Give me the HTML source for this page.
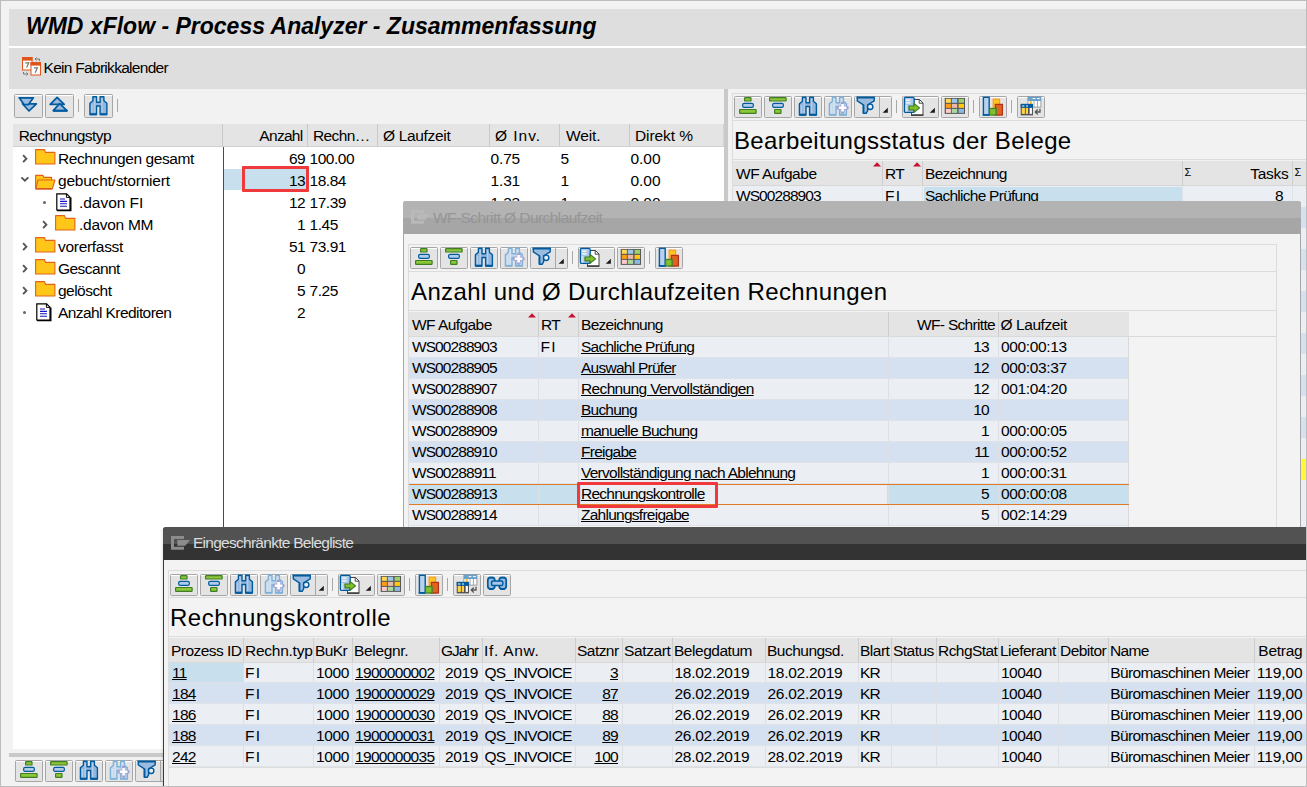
<!DOCTYPE html><html><head><meta charset="utf-8"><title>WMD xFlow - Process Analyzer</title><style>
*{box-sizing:border-box;margin:0;padding:0}
html,body{width:1307px;height:787px;overflow:hidden;background:#f2f2f2}
body{position:relative;font-family:"Liberation Sans",sans-serif;font-size:15.5px;letter-spacing:-0.72px;color:#000;white-space:nowrap}
.a{position:absolute}
.t{position:absolute;white-space:pre;line-height:21px;height:21px}
.r{text-align:right}
.u{text-decoration:underline;text-underline-offset:1px;text-decoration-thickness:1px}
.btn{position:absolute;height:22px;background:#e4e4e4;border:1px solid #a6a6a6;border-radius:1.5px;box-shadow:inset 0 1px 0 #ffffff}
.btn svg{position:absolute;left:-1px;top:-1px}
.sep{position:absolute;width:1px;height:13px;background:#a8a8a8}
.hl{position:absolute;height:1px;background:#dcdcdc}
.vl{position:absolute;width:1px;background:#dcdcdc}
.hd{position:absolute;background:#e4e4e4}
.h1{position:absolute;font-size:24px;letter-spacing:0.3px;line-height:30px;height:30px;white-space:pre}
</style></head><body>
<div class="a" style="left:9px;top:9px;width:1297px;height:37px;background:#dedede;"></div>
<div class="a" style="left:26px;top:9px;height:37px;line-height:35px;font-size:23px;font-weight:bold;font-style:italic;letter-spacing:0px;white-space:pre">WMD xFlow - Process Analyzer - Zusammenfassung</div>
<div class="a" style="left:9px;top:46px;width:1297px;height:2px;background:#ffffff;"></div>
<div class="a" style="left:9px;top:48px;width:1297px;height:41px;background:#dedede;"></div>
<svg class="a" style="left:21px;top:56px" width="22" height="22" viewBox="0 0 22 22"><rect x="1.5" y="1.5" width="9.5" height="12.5" fill="#fff" stroke="#e0541c" stroke-width="1"/><rect x="1" y="1" width="10.5" height="3.6" fill="#e0541c"/><path d="M4.2 6.8 H7.8 L5.6 11.6" fill="none" stroke="#777" stroke-width="1.2"/><rect x="10" y="6.5" width="9.5" height="12.5" fill="#fff" stroke="#e0541c" stroke-width="1"/><rect x="9.5" y="6" width="10.5" height="3.6" fill="#e0541c"/><path d="M12.8 11.8 H16.4 L14.2 16.8" fill="none" stroke="#777" stroke-width="1.2"/><path d="M14 3 H18.5 V5 M15.5 1.5 L14 3 L15.5 4.5" fill="none" stroke="#777" stroke-width="1"/><path d="M2.5 16 V18 H7 M5.5 16.5 L7 18 L5.5 19.5" fill="none" stroke="#777" stroke-width="1"/></svg>
<div class="t " style="left:43.5px;top:57px;line-height:21px;height:21px;;letter-spacing:-0.704px">Kein Fabrikkalender</div>
<div class="btn" style="left:14px;top:94px;width:29px;height:24px"><svg width="29" height="24" viewBox="0 0 29 24"><path d="M8.4 9.8 H22.4 L15 17 Z" fill="#9bbbdf" stroke="#005b9e" stroke-width="1.7" stroke-linejoin="round"/><path d="M5.2 3.8 H19.4 L14.4 10.6 H10 Z" fill="#9bbbdf" stroke="#005b9e" stroke-width="1.7" stroke-linejoin="round"/><path d="M5 3.7 H19.6" stroke="#005b9e" stroke-width="1.2"/></svg></div>
<div class="btn" style="left:45px;top:94px;width:29px;height:24px"><svg width="29" height="24" viewBox="0 0 29 24"><path d="M12.1 3.4 L19.2 10.4 H5.2 Z" fill="#9bbbdf" stroke="#005b9e" stroke-width="1.7" stroke-linejoin="round"/><path d="M14.6 9.6 L22 16.6 H8.2 Z" fill="#9bbbdf" stroke="#005b9e" stroke-width="1.7" stroke-linejoin="round"/><path d="M8 16.8 H22.4" stroke="#005b9e" stroke-width="2"/></svg></div>
<div class="sep" style="left:78px;top:99px"></div>
<div class="btn" style="left:84px;top:94px;width:29px;height:24px"><svg width="29" height="24" viewBox="-0.5 -1.5 29 24"><path d="M8.4 1.3 H12 V6.7 H15.6 V1.3 H19.4 V5.2 L22.4 7.8 V19 H15.6 V10.5 H12 V19 H5.4 V7.8 L8.4 5.2 Z" fill="#92b5dc" stroke="#005b9e" stroke-width="1.4" stroke-linejoin="round"/><path d="M5.4 18.7 H12 M15.6 18.7 H22.4" stroke="#005b9e" stroke-width="2"/><path d="M7.4 9 V17 M10.2 3 V17 M17.6 3 V17" stroke="#b4cde9" stroke-width="1.4"/></svg></div>
<div class="sep" style="left:117px;top:99px"></div>
<div class="a" style="left:13px;top:124px;width:711px;height:23px;background:#e4e4e4;"></div>
<div class="a" style="left:13px;top:146px;width:711px;height:1px;background:#d0d0d0;"></div>
<div class="a" style="left:13px;top:147px;width:711px;height:602px;background:#ffffff;"></div>
<div class="a" style="left:222px;top:124px;width:1px;height:22px;background:#c9c9c9;"></div>
<div class="a" style="left:307px;top:124px;width:1px;height:22px;background:#c9c9c9;"></div>
<div class="a" style="left:377px;top:124px;width:1px;height:22px;background:#c9c9c9;"></div>
<div class="a" style="left:489px;top:124px;width:1px;height:22px;background:#c9c9c9;"></div>
<div class="a" style="left:559px;top:124px;width:1px;height:22px;background:#c9c9c9;"></div>
<div class="a" style="left:629px;top:124px;width:1px;height:22px;background:#c9c9c9;"></div>
<div class="a" style="left:723px;top:124px;width:1px;height:23px;background:#d4d4d4;"></div>
<div class="a" style="left:223px;top:147px;width:1px;height:380px;background:#4a4a4a;"></div>
<div class="t " style="left:18.7px;top:125px;line-height:22px;height:22px;;letter-spacing:-0.566px">Rechnungstyp</div>
<div class="t " style="left:313px;top:125px;line-height:22px;height:22px;;letter-spacing:-0.624px">Rechn…</div>
<div class="t " style="left:383px;top:125px;line-height:22px;height:22px;;letter-spacing:-0.328px">Ø Laufzeit</div>
<div class="t " style="left:495px;top:125px;line-height:22px;height:22px;;letter-spacing:0.984px">Ø Inv.</div>
<div class="t " style="left:566px;top:125px;line-height:22px;height:22px;;letter-spacing:-0.126px">Weit.</div>
<div class="t " style="left:635px;top:125px;line-height:22px;height:22px;;letter-spacing:-0.086px">Direkt %</div>
<div class="t r" style="left:230px;top:125px;line-height:22px;height:22px;width:72.5px;;letter-spacing:-0.705px">Anzahl</div>
<div class="a" style="left:224px;top:169px;width:84px;height:21px;background:#c8e0ee;"></div>
<svg class="a" style="left:21.5px;top:153.5px" width="7" height="10" viewBox="0 0 7 10"><path d="M1.1 1.2 L4.4 4.7 L1.1 8.2" fill="none" stroke="#555" stroke-width="1.9"/></svg>
<svg class="a" style="left:35px;top:149px" width="21" height="16" viewBox="0 0 21 16"><path d="M0.6 15 V0.6 H9.6 L10.4 3.4 H19.9 V15 Z" fill="#ffc61a" stroke="#e2621b" stroke-width="1.1" stroke-linejoin="round"/></svg>
<div class="t " style="left:58px;top:148px;line-height:22px;height:22px;;letter-spacing:-0.421px">Rechnungen gesamt</div>
<div class="t r" style="left:230px;top:148px;line-height:22px;height:22px;width:75px;;letter-spacing:-0.578px">69</div>
<div class="t " style="left:309.5px;top:148px;line-height:22px;height:22px;;letter-spacing:-0.455px">100.00</div>
<div class="t " style="left:490.5px;top:148px;line-height:22px;height:22px;;letter-spacing:-0.143px">0.75</div>
<div class="t " style="left:560.5px;top:148px;line-height:22px;height:22px;;letter-spacing:-0.728px">5</div>
<div class="t " style="left:630.5px;top:148px;line-height:22px;height:22px;;letter-spacing:-0.043px">0.00</div>
<svg class="a" style="left:20px;top:176px" width="10" height="7" viewBox="0 0 10 7"><path d="M1.4 1.4 L4.9 4.6 L8.4 1.4" fill="none" stroke="#555" stroke-width="1.9"/></svg>
<svg class="a" style="left:35px;top:174px" width="21" height="16" viewBox="0 0 21 16"><path d="M0.6 14.6 V1.4 H8 L9 3.4 H16.6 V6" fill="#ffc61a" stroke="#e2621b" stroke-width="1.1" stroke-linejoin="round"/><path d="M0.8 14.6 L3 6 H20 L17.4 14.6 Z" fill="#ffc61a" stroke="#e2621b" stroke-width="1.1" stroke-linejoin="round"/><path d="M0.4 15 H17.4" stroke="#d9531a" stroke-width="1.2"/></svg>
<div class="t " style="left:58px;top:170px;line-height:22px;height:22px;;letter-spacing:-0.219px">gebucht/storniert</div>
<div class="t r" style="left:230px;top:170px;line-height:22px;height:22px;width:75px;;letter-spacing:-0.578px">13</div>
<div class="t " style="left:309.5px;top:170px;line-height:22px;height:22px;;letter-spacing:-0.450px">18.84</div>
<div class="t " style="left:490.5px;top:170px;line-height:22px;height:22px;;letter-spacing:-0.143px">1.31</div>
<div class="t " style="left:560.5px;top:170px;line-height:22px;height:22px;;letter-spacing:-0.728px">1</div>
<div class="t " style="left:630.5px;top:170px;line-height:22px;height:22px;;letter-spacing:-0.043px">0.00</div>
<div class="a" style="left:43px;top:200.5px;width:3px;height:3px;background:#666;border-radius:2px"></div>
<svg class="a" style="left:56px;top:193px" width="16" height="19" viewBox="0 0 16 19"><path d="M0.8 0.8 H10.6 L14 4.2 V17 H0.8 Z" fill="#fff" stroke="#000" stroke-width="1.2"/><path d="M10.4 0.8 V4.4 H14" fill="none" stroke="#000" stroke-width="1"/><path d="M1 17.6 H14.8 V4.6" fill="none" stroke="#000" stroke-width="1.4"/><path d="M4 6 H9 M4 8.4 H11 M4 10.8 H11 M4 13.2 H11" stroke="#1414c8" stroke-width="1.1"/></svg>
<div class="t " style="left:79px;top:192px;line-height:22px;height:22px;;letter-spacing:-0.032px">.davon FI</div>
<div class="t r" style="left:230px;top:192px;line-height:22px;height:22px;width:75px;;letter-spacing:-0.578px">12</div>
<div class="t " style="left:309.5px;top:192px;line-height:22px;height:22px;;letter-spacing:-0.450px">17.39</div>
<div class="t " style="left:490.5px;top:192px;line-height:22px;height:22px;;letter-spacing:-0.143px">1.33</div>
<div class="t " style="left:560.5px;top:192px;line-height:22px;height:22px;;letter-spacing:-0.728px">1</div>
<div class="t " style="left:630.5px;top:192px;line-height:22px;height:22px;;letter-spacing:-0.043px">0.00</div>
<svg class="a" style="left:41.5px;top:219.5px" width="7" height="10" viewBox="0 0 7 10"><path d="M1.1 1.2 L4.4 4.7 L1.1 8.2" fill="none" stroke="#555" stroke-width="1.9"/></svg>
<svg class="a" style="left:55px;top:215px" width="21" height="16" viewBox="0 0 21 16"><path d="M0.6 15 V0.6 H9.6 L10.4 3.4 H19.9 V15 Z" fill="#ffc61a" stroke="#e2621b" stroke-width="1.1" stroke-linejoin="round"/></svg>
<div class="t " style="left:79px;top:214px;line-height:22px;height:22px;;letter-spacing:-0.275px">.davon MM</div>
<div class="t r" style="left:230px;top:214px;line-height:22px;height:22px;width:75px;;letter-spacing:-0.578px">1</div>
<div class="t " style="left:309.5px;top:214px;line-height:22px;height:22px;;letter-spacing:-0.443px">1.45</div>
<div class="t " style="left:490.5px;top:214px;line-height:22px;height:22px;;letter-spacing:0.100px"></div>
<div class="t " style="left:560.5px;top:214px;line-height:22px;height:22px;;letter-spacing:-0.450px"></div>
<div class="t " style="left:630.5px;top:214px;line-height:22px;height:22px;;letter-spacing:0.200px"></div>
<svg class="a" style="left:21.5px;top:241.5px" width="7" height="10" viewBox="0 0 7 10"><path d="M1.1 1.2 L4.4 4.7 L1.1 8.2" fill="none" stroke="#555" stroke-width="1.9"/></svg>
<svg class="a" style="left:35px;top:237px" width="21" height="16" viewBox="0 0 21 16"><path d="M0.6 15 V0.6 H9.6 L10.4 3.4 H19.9 V15 Z" fill="#ffc61a" stroke="#e2621b" stroke-width="1.1" stroke-linejoin="round"/></svg>
<div class="t " style="left:58px;top:236px;line-height:22px;height:22px;;letter-spacing:-0.300px">vorerfasst</div>
<div class="t r" style="left:230px;top:236px;line-height:22px;height:22px;width:75px;;letter-spacing:-0.578px">51</div>
<div class="t " style="left:309.5px;top:236px;line-height:22px;height:22px;;letter-spacing:-0.450px">73.91</div>
<div class="t " style="left:490.5px;top:236px;line-height:22px;height:22px;;letter-spacing:0.100px"></div>
<div class="t " style="left:560.5px;top:236px;line-height:22px;height:22px;;letter-spacing:-0.450px"></div>
<div class="t " style="left:630.5px;top:236px;line-height:22px;height:22px;;letter-spacing:0.200px"></div>
<svg class="a" style="left:21.5px;top:263.5px" width="7" height="10" viewBox="0 0 7 10"><path d="M1.1 1.2 L4.4 4.7 L1.1 8.2" fill="none" stroke="#555" stroke-width="1.9"/></svg>
<svg class="a" style="left:35px;top:259px" width="21" height="16" viewBox="0 0 21 16"><path d="M0.6 15 V0.6 H9.6 L10.4 3.4 H19.9 V15 Z" fill="#ffc61a" stroke="#e2621b" stroke-width="1.1" stroke-linejoin="round"/></svg>
<div class="t " style="left:58px;top:258px;line-height:22px;height:22px;;letter-spacing:-0.568px">Gescannt</div>
<div class="t r" style="left:230px;top:258px;line-height:22px;height:22px;width:75px;;letter-spacing:-0.578px">0</div>
<div class="t " style="left:309.5px;top:258px;line-height:22px;height:22px;;letter-spacing:-0.200px"></div>
<div class="t " style="left:490.5px;top:258px;line-height:22px;height:22px;;letter-spacing:0.100px"></div>
<div class="t " style="left:560.5px;top:258px;line-height:22px;height:22px;;letter-spacing:-0.450px"></div>
<div class="t " style="left:630.5px;top:258px;line-height:22px;height:22px;;letter-spacing:0.200px"></div>
<svg class="a" style="left:21.5px;top:285.5px" width="7" height="10" viewBox="0 0 7 10"><path d="M1.1 1.2 L4.4 4.7 L1.1 8.2" fill="none" stroke="#555" stroke-width="1.9"/></svg>
<svg class="a" style="left:35px;top:281px" width="21" height="16" viewBox="0 0 21 16"><path d="M0.6 15 V0.6 H9.6 L10.4 3.4 H19.9 V15 Z" fill="#ffc61a" stroke="#e2621b" stroke-width="1.1" stroke-linejoin="round"/></svg>
<div class="t " style="left:58px;top:280px;line-height:22px;height:22px;;letter-spacing:-0.533px">gelöscht</div>
<div class="t r" style="left:230px;top:280px;line-height:22px;height:22px;width:75px;;letter-spacing:-0.578px">5</div>
<div class="t " style="left:309.5px;top:280px;line-height:22px;height:22px;;letter-spacing:-0.443px">7.25</div>
<div class="t " style="left:490.5px;top:280px;line-height:22px;height:22px;;letter-spacing:0.100px"></div>
<div class="t " style="left:560.5px;top:280px;line-height:22px;height:22px;;letter-spacing:-0.450px"></div>
<div class="t " style="left:630.5px;top:280px;line-height:22px;height:22px;;letter-spacing:0.200px"></div>
<div class="a" style="left:23px;top:310.5px;width:3px;height:3px;background:#666;border-radius:2px"></div>
<svg class="a" style="left:36px;top:303px" width="16" height="19" viewBox="0 0 16 19"><path d="M0.8 0.8 H10.6 L14 4.2 V17 H0.8 Z" fill="#fff" stroke="#000" stroke-width="1.2"/><path d="M10.4 0.8 V4.4 H14" fill="none" stroke="#000" stroke-width="1"/><path d="M1 17.6 H14.8 V4.6" fill="none" stroke="#000" stroke-width="1.4"/><path d="M4 6 H9 M4 8.4 H11 M4 10.8 H11 M4 13.2 H11" stroke="#1414c8" stroke-width="1.1"/></svg>
<div class="t " style="left:58px;top:302px;line-height:22px;height:22px;;letter-spacing:-0.584px">Anzahl Kreditoren</div>
<div class="t r" style="left:230px;top:302px;line-height:22px;height:22px;width:75px;;letter-spacing:-0.578px">2</div>
<div class="t " style="left:309.5px;top:302px;line-height:22px;height:22px;;letter-spacing:-0.200px"></div>
<div class="t " style="left:490.5px;top:302px;line-height:22px;height:22px;;letter-spacing:0.100px"></div>
<div class="t " style="left:560.5px;top:302px;line-height:22px;height:22px;;letter-spacing:-0.450px"></div>
<div class="t " style="left:630.5px;top:302px;line-height:22px;height:22px;;letter-spacing:0.200px"></div>
<div class="a" style="left:242px;top:166px;width:67px;height:26px;border:3px solid #f0393c;border-radius:1px"></div>
<div class="a" style="left:9px;top:753px;width:400px;height:4px;background:#c9c9c9;"></div>
<div class="btn" style="left:15px;top:760px;width:28px;height:22px"><svg width="28" height="22" viewBox="0 0 28 22"><rect x="10.6" y="1.6" width="6.3999999999999995" height="3.3999999999999995" rx="0.6" fill="#8cc63a" stroke="#3e7d23" stroke-width="1.2"/><rect x="8.6" y="7.3999999999999995" width="10.8" height="4.0" rx="1.6" fill="#b3cde9" stroke="#005b9e" stroke-width="1.2"/><rect x="5.6" y="13.5" width="16.5" height="3.8" rx="0.6" fill="#8cc63a" stroke="#3e7d23" stroke-width="1.2"/></svg></div>
<div class="btn" style="left:45px;top:760px;width:28px;height:22px"><svg width="28" height="22" viewBox="0 0 28 22"><rect x="5.6" y="1.6" width="16.5" height="3.3999999999999995" rx="0.6" fill="#8cc63a" stroke="#3e7d23" stroke-width="1.2"/><rect x="8.6" y="7.3999999999999995" width="10.8" height="4.0" rx="1.6" fill="#b3cde9" stroke="#005b9e" stroke-width="1.2"/><rect x="10.6" y="13.5" width="6.3999999999999995" height="3.8" rx="0.6" fill="#8cc63a" stroke="#3e7d23" stroke-width="1.2"/></svg></div>
<div class="btn" style="left:75px;top:760px;width:28px;height:22px"><svg width="28" height="22" viewBox="0 0 28 22"><path d="M8.4 1.3 H12 V6.7 H15.6 V1.3 H19.4 V5.2 L22.4 7.8 V19 H15.6 V10.5 H12 V19 H5.4 V7.8 L8.4 5.2 Z" fill="#92b5dc" stroke="#005b9e" stroke-width="1.4" stroke-linejoin="round"/><path d="M5.4 18.7 H12 M15.6 18.7 H22.4" stroke="#005b9e" stroke-width="2"/><path d="M7.4 9 V17 M10.2 3 V17 M17.6 3 V17" stroke="#b4cde9" stroke-width="1.4"/></svg></div>
<div class="btn" style="left:105px;top:760px;width:28px;height:22px"><svg width="28" height="22" viewBox="0 0 28 22"><path d="M8.4 1.3 H12 V6.7 H15.6 V1.3 H19.4 V5.2 L22.4 7.8 V19 H15.6 V10.5 H12 V19 H5.4 V7.8 L8.4 5.2 Z" fill="#c6d9ec" stroke="#7eb1d8" stroke-width="1.4" stroke-linejoin="round"/><path d="M5.4 18.7 H12 M15.6 18.7 H22.4" stroke="#7eb1d8" stroke-width="1.2"/><path d="M7.4 9 V17 M10.2 3 V17 M17.6 3 V17" stroke="#d3e3f1" stroke-width="1.4"/><path d="M18.6 7.6 V16 M14.4 11.8 H22.8" stroke="#a3a3d3" stroke-width="4" stroke-linecap="round"/><path d="M18.6 8 V15.6 M14.8 11.8 H22.4" stroke="#fff" stroke-width="2.6"/></svg></div>
<div class="btn" style="left:135px;top:760px;width:38px;height:22px"><svg width="38" height="22" viewBox="0 0 38 22"><path d="M3.3 1.5 H20.2 V4.8 L13.6 8.8 V14.8 L12.2 17.2 H9.4 V8.8 L3.3 4.8 Z" fill="#9bbbdf" stroke="#005b9e" stroke-width="1.4" stroke-linejoin="miter"/><path d="M2.6 1.5 H20.9" stroke="#005b9e" stroke-width="1.7"/><path d="M9.5 8.8 V17" stroke="#005b9e" stroke-width="1.7"/><circle cx="16.2" cy="10.8" r="2.7" fill="#e9eef4" stroke="#005b9e" stroke-width="1.4"/><path d="M25.5 0 V22" stroke="#a6a6a6" stroke-width="1"/><path d="M33.800000000000004 11.8 V16.8 H28.6 Z" fill="#1a1a1a"/></svg></div>
<div class="sep" style="left:177px;top:764px"></div>
<div class="btn" style="left:183px;top:760px;width:37px;height:22px"><svg width="37" height="22" viewBox="0 0 37 22"><path d="M9.5 3.5 H17.5 L21 7 V19 H9.5 Z" fill="#fff" stroke="#444" stroke-width="1"/><path d="M9 19.2 H21.4" stroke="#444" stroke-width="1.6"/><path d="M17.2 3.4 V7.2 H21" fill="none" stroke="#444" stroke-width="1"/><rect x="2.4" y="1.4" width="9.8" height="15" rx="1.2" fill="#a9c6e6" stroke="#005b9e" stroke-width="1.3"/><path d="M4 4.2 H8.6 M4 6.8 H8.6" stroke="#fff" stroke-width="1.2"/><rect x="3.4" y="9" width="2" height="6.6" fill="#cfe0f2"/><path d="M7 10 H12 V7.4 L17.6 11.9 L12 16.4 V13.8 H7 Z" fill="#7fbf2a" stroke="#3e7d23" stroke-width="1.2" stroke-linejoin="round"/><path d="M32.9 11.8 V16.8 H27.7 Z" fill="#1a1a1a"/></svg></div>
<div class="btn" style="left:222px;top:760px;width:28px;height:22px"><svg width="28" height="22" viewBox="0 0 28 22"><rect x="3.7" y="1.9" width="20.3" height="16" fill="#585858"/><rect x="4.9" y="2.8" width="5" height="4" fill="#ffd85a"/><rect x="10.8" y="2.8" width="5.4" height="4" fill="#9fc5e9"/><rect x="17.6" y="2.8" width="5.4" height="4" fill="#9cd06c"/><rect x="4.9" y="7.9" width="5" height="4" fill="#ff9b12"/><rect x="10.8" y="7.9" width="5.4" height="4" fill="#e6b9a9"/><rect x="17.6" y="7.9" width="5.4" height="4" fill="#ffc912"/><rect x="4.9" y="12.9" width="5" height="4" fill="#ffc9cd"/><rect x="10.8" y="12.9" width="5.4" height="4" fill="#a9d999"/><rect x="17.6" y="12.9" width="5.4" height="4" fill="#8bb9e1"/></svg></div>
<div class="sep" style="left:254px;top:764px"></div>
<div class="btn" style="left:260px;top:760px;width:28px;height:22px"><svg width="28" height="22" viewBox="0 0 28 22"><rect x="14.2" y="3.2" width="6.4" height="16" fill="#ffc426" stroke="#ff9b12" stroke-width="1.2"/><rect x="4.4" y="1.3" width="5.8" height="17.5" fill="#b9d1ec" stroke="#005b9e" stroke-width="1.4"/><path d="M3.7 19 H10.9" stroke="#005b9e" stroke-width="1.6"/><rect x="16.4" y="8.4" width="7" height="10.6" fill="#e0641f" stroke="#b3321a" stroke-width="1.3"/><rect x="10.5" y="12.5" width="6.6" height="6.5" fill="#80c12f" stroke="#3e8030" stroke-width="1.3"/></svg></div>
<div class="a" style="left:724px;top:89px;width:4px;height:120px;background:#c9c9c9;"></div>
<div class="a" style="left:732px;top:93px;width:574px;height:1px;background:#dcdcdc;"></div>
<div class="a" style="left:732px;top:93px;width:1px;height:120px;background:#dcdcdc;"></div>
<div class="btn" style="left:734px;top:96px;width:28px;height:22px"><svg width="28" height="22" viewBox="0 0 28 22"><rect x="10.6" y="1.6" width="6.3999999999999995" height="3.3999999999999995" rx="0.6" fill="#8cc63a" stroke="#3e7d23" stroke-width="1.2"/><rect x="8.6" y="7.3999999999999995" width="10.8" height="4.0" rx="1.6" fill="#b3cde9" stroke="#005b9e" stroke-width="1.2"/><rect x="5.6" y="13.5" width="16.5" height="3.8" rx="0.6" fill="#8cc63a" stroke="#3e7d23" stroke-width="1.2"/></svg></div>
<div class="btn" style="left:764px;top:96px;width:28px;height:22px"><svg width="28" height="22" viewBox="0 0 28 22"><rect x="5.6" y="1.6" width="16.5" height="3.3999999999999995" rx="0.6" fill="#8cc63a" stroke="#3e7d23" stroke-width="1.2"/><rect x="8.6" y="7.3999999999999995" width="10.8" height="4.0" rx="1.6" fill="#b3cde9" stroke="#005b9e" stroke-width="1.2"/><rect x="10.6" y="13.5" width="6.3999999999999995" height="3.8" rx="0.6" fill="#8cc63a" stroke="#3e7d23" stroke-width="1.2"/></svg></div>
<div class="btn" style="left:794px;top:96px;width:28px;height:22px"><svg width="28" height="22" viewBox="0 0 28 22"><path d="M8.4 1.3 H12 V6.7 H15.6 V1.3 H19.4 V5.2 L22.4 7.8 V19 H15.6 V10.5 H12 V19 H5.4 V7.8 L8.4 5.2 Z" fill="#92b5dc" stroke="#005b9e" stroke-width="1.4" stroke-linejoin="round"/><path d="M5.4 18.7 H12 M15.6 18.7 H22.4" stroke="#005b9e" stroke-width="2"/><path d="M7.4 9 V17 M10.2 3 V17 M17.6 3 V17" stroke="#b4cde9" stroke-width="1.4"/></svg></div>
<div class="btn" style="left:824px;top:96px;width:28px;height:22px"><svg width="28" height="22" viewBox="0 0 28 22"><path d="M8.4 1.3 H12 V6.7 H15.6 V1.3 H19.4 V5.2 L22.4 7.8 V19 H15.6 V10.5 H12 V19 H5.4 V7.8 L8.4 5.2 Z" fill="#c6d9ec" stroke="#7eb1d8" stroke-width="1.4" stroke-linejoin="round"/><path d="M5.4 18.7 H12 M15.6 18.7 H22.4" stroke="#7eb1d8" stroke-width="1.2"/><path d="M7.4 9 V17 M10.2 3 V17 M17.6 3 V17" stroke="#d3e3f1" stroke-width="1.4"/><path d="M18.6 7.6 V16 M14.4 11.8 H22.8" stroke="#a3a3d3" stroke-width="4" stroke-linecap="round"/><path d="M18.6 8 V15.6 M14.8 11.8 H22.4" stroke="#fff" stroke-width="2.6"/></svg></div>
<div class="btn" style="left:854px;top:96px;width:38px;height:22px"><svg width="38" height="22" viewBox="0 0 38 22"><path d="M3.3 1.5 H20.2 V4.8 L13.6 8.8 V14.8 L12.2 17.2 H9.4 V8.8 L3.3 4.8 Z" fill="#9bbbdf" stroke="#005b9e" stroke-width="1.4" stroke-linejoin="miter"/><path d="M2.6 1.5 H20.9" stroke="#005b9e" stroke-width="1.7"/><path d="M9.5 8.8 V17" stroke="#005b9e" stroke-width="1.7"/><circle cx="16.2" cy="10.8" r="2.7" fill="#e9eef4" stroke="#005b9e" stroke-width="1.4"/><path d="M25.5 0 V22" stroke="#a6a6a6" stroke-width="1"/><path d="M33.800000000000004 11.8 V16.8 H28.6 Z" fill="#1a1a1a"/></svg></div>
<div class="sep" style="left:896px;top:100px"></div>
<div class="btn" style="left:902px;top:96px;width:37px;height:22px"><svg width="37" height="22" viewBox="0 0 37 22"><path d="M9.5 3.5 H17.5 L21 7 V19 H9.5 Z" fill="#fff" stroke="#444" stroke-width="1"/><path d="M9 19.2 H21.4" stroke="#444" stroke-width="1.6"/><path d="M17.2 3.4 V7.2 H21" fill="none" stroke="#444" stroke-width="1"/><rect x="2.4" y="1.4" width="9.8" height="15" rx="1.2" fill="#a9c6e6" stroke="#005b9e" stroke-width="1.3"/><path d="M4 4.2 H8.6 M4 6.8 H8.6" stroke="#fff" stroke-width="1.2"/><rect x="3.4" y="9" width="2" height="6.6" fill="#cfe0f2"/><path d="M7 10 H12 V7.4 L17.6 11.9 L12 16.4 V13.8 H7 Z" fill="#7fbf2a" stroke="#3e7d23" stroke-width="1.2" stroke-linejoin="round"/><path d="M32.9 11.8 V16.8 H27.7 Z" fill="#1a1a1a"/></svg></div>
<div class="btn" style="left:941px;top:96px;width:28px;height:22px"><svg width="28" height="22" viewBox="0 0 28 22"><rect x="3.7" y="1.9" width="20.3" height="16" fill="#585858"/><rect x="4.9" y="2.8" width="5" height="4" fill="#ffd85a"/><rect x="10.8" y="2.8" width="5.4" height="4" fill="#9fc5e9"/><rect x="17.6" y="2.8" width="5.4" height="4" fill="#9cd06c"/><rect x="4.9" y="7.9" width="5" height="4" fill="#ff9b12"/><rect x="10.8" y="7.9" width="5.4" height="4" fill="#e6b9a9"/><rect x="17.6" y="7.9" width="5.4" height="4" fill="#ffc912"/><rect x="4.9" y="12.9" width="5" height="4" fill="#ffc9cd"/><rect x="10.8" y="12.9" width="5.4" height="4" fill="#a9d999"/><rect x="17.6" y="12.9" width="5.4" height="4" fill="#8bb9e1"/></svg></div>
<div class="sep" style="left:973px;top:100px"></div>
<div class="btn" style="left:979px;top:96px;width:28px;height:22px"><svg width="28" height="22" viewBox="0 0 28 22"><rect x="14.2" y="3.2" width="6.4" height="16" fill="#ffc426" stroke="#ff9b12" stroke-width="1.2"/><rect x="4.4" y="1.3" width="5.8" height="17.5" fill="#b9d1ec" stroke="#005b9e" stroke-width="1.4"/><path d="M3.7 19 H10.9" stroke="#005b9e" stroke-width="1.6"/><rect x="16.4" y="8.4" width="7" height="10.6" fill="#e0641f" stroke="#b3321a" stroke-width="1.3"/><rect x="10.5" y="12.5" width="6.6" height="6.5" fill="#80c12f" stroke="#3e8030" stroke-width="1.3"/></svg></div>
<div class="sep" style="left:1011px;top:100px"></div>
<div class="btn" style="left:1017px;top:96px;width:28px;height:22px"><svg width="28" height="22" viewBox="0 0 28 22"><rect x="10.9" y="0.8" width="13" height="10.3" fill="#fff" stroke="#8a8a8a" stroke-width="0.8"/><rect x="10.9" y="0.8" width="13" height="4.2" fill="#6aa0cc"/><path d="M15.6 2.6 H18.4 M20 2.6 H22.8" stroke="#fff" stroke-width="1"/><rect x="12.7" y="5" width="2.2" height="3" fill="#ffc426"/><path d="M17 5 V11 M20.4 5 V11" stroke="#8a8a8a" stroke-width="0.8"/><rect x="3.7" y="7.9" width="12.3" height="11.5" fill="#555"/><rect x="3.7" y="7.9" width="12.3" height="4" fill="#005b9e"/><path d="M5 10 H7.4 M9 10 H11" stroke="#fff" stroke-width="1"/><rect x="4.8" y="11.9" width="3.1" height="6" fill="#ffd24a"/><rect x="8.8" y="11.9" width="2.2" height="6" fill="#ffd24a"/><rect x="12.7" y="11.9" width="2.2" height="6" fill="#fff"/><path d="M23 12.8 V16 H18.4 M20.8 13.6 L18.2 16 L20.8 18.6" fill="none" stroke="#555" stroke-width="1.3"/></svg></div>
<div class="a" style="left:733px;top:120px;width:573px;height:1px;background:#dcdcdc;"></div>
<div class="h1" style="left:734px;top:126px;letter-spacing:0.32px">Bearbeitungsstatus der Belege</div>
<div class="a" style="left:733px;top:159px;width:573px;height:1px;background:#dcdcdc;"></div>
<div class="a" style="left:733px;top:161px;width:573px;height:25px;background:#e4e4e4;"></div>
<div class="a" style="left:882px;top:161px;width:1px;height:25px;background:#cdcdcd;"></div>
<div class="a" style="left:922px;top:161px;width:1px;height:25px;background:#cdcdcd;"></div>
<div class="a" style="left:1182px;top:161px;width:1px;height:25px;background:#cdcdcd;"></div>
<div class="a" style="left:1292px;top:161px;width:1px;height:25px;background:#cdcdcd;"></div>
<div class="t " style="left:736px;top:161px;line-height:25px;height:25px;;letter-spacing:-0.475px">WF Aufgabe</div>
<div class="t " style="left:885px;top:161px;line-height:25px;height:25px;;letter-spacing:-0.779px">RT</div>
<div class="t " style="left:925px;top:161px;line-height:25px;height:25px;;letter-spacing:-0.713px">Bezeichnung</div>
<div class="t " style="left:1184.5px;top:160px;line-height:25px;height:25px;font-size:11px;font-family:"Liberation Serif",serif;letter-spacing:0">Σ</div>
<div class="t r" style="left:1200px;top:161px;line-height:25px;height:25px;width:88.5px;;letter-spacing:-0.256px">Tasks</div>
<div class="t " style="left:1294.5px;top:160px;line-height:25px;height:25px;font-size:11px;font-family:"Liberation Serif",serif;letter-spacing:0">Σ</div>
<svg class="a" style="left:873px;top:162px" width="8" height="5" viewBox="0 0 8 5"><path d="M0 4.6 L4 0.2 L8 4.6 Z" fill="#c8102e"/></svg>
<svg class="a" style="left:913px;top:162px" width="8" height="5" viewBox="0 0 8 5"><path d="M0 4.6 L4 0.2 L8 4.6 Z" fill="#c8102e"/></svg>
<div class="a" style="left:733px;top:186px;width:573px;height:21px;background:#ebeef2;"></div>
<div class="a" style="left:733px;top:207px;width:573px;height:21px;background:#d5e0f0;"></div>
<div class="a" style="left:733px;top:228px;width:573px;height:21px;background:#ebeef2;"></div>
<div class="a" style="left:733px;top:249px;width:573px;height:21px;background:#d5e0f0;"></div>
<div class="a" style="left:733px;top:270px;width:573px;height:21px;background:#ebeef2;"></div>
<div class="a" style="left:733px;top:291px;width:573px;height:21px;background:#d5e0f0;"></div>
<div class="a" style="left:733px;top:312px;width:573px;height:21px;background:#ebeef2;"></div>
<div class="a" style="left:733px;top:333px;width:573px;height:21px;background:#d5e0f0;"></div>
<div class="a" style="left:733px;top:354px;width:573px;height:21px;background:#ebeef2;"></div>
<div class="a" style="left:733px;top:375px;width:573px;height:21px;background:#d5e0f0;"></div>
<div class="a" style="left:733px;top:396px;width:573px;height:21px;background:#ebeef2;"></div>
<div class="a" style="left:733px;top:417px;width:573px;height:21px;background:#d5e0f0;"></div>
<div class="a" style="left:733px;top:438px;width:573px;height:21px;background:#ebeef2;"></div>
<div class="a" style="left:733px;top:459px;width:573px;height:21px;background:#d5e0f0;"></div>
<div class="a" style="left:733px;top:480px;width:573px;height:21px;background:#ebeef2;"></div>
<div class="a" style="left:733px;top:501px;width:573px;height:21px;background:#ebeef2;"></div>
<div class="a" style="left:733px;top:522px;width:573px;height:21px;background:#ebeef2;"></div>
<div class="a" style="left:924px;top:187px;width:258px;height:20px;background:#c8e0ee;"></div>
<div class="a" style="left:882px;top:186px;width:1px;height:21px;background:#dfe3e8;"></div>
<div class="a" style="left:922px;top:186px;width:1px;height:21px;background:#dfe3e8;"></div>
<div class="a" style="left:1182px;top:186px;width:1px;height:21px;background:#dfe3e8;"></div>
<div class="a" style="left:1292px;top:186px;width:1px;height:21px;background:#dfe3e8;"></div>
<div class="t " style="left:736px;top:184.6px;line-height:21px;height:21px;;letter-spacing:-0.923px">WS00288903</div>
<div class="t " style="left:885px;top:184.6px;line-height:21px;height:21px;;letter-spacing:1.278px">FI</div>
<div class="t " style="left:925px;top:184.6px;line-height:21px;height:21px;;letter-spacing:-0.739px">Sachliche Prüfung</div>
<div class="t r" style="left:1200px;top:184.6px;line-height:21px;height:21px;width:83px;;letter-spacing:-0.728px">8</div>
<div class="a" style="left:733px;top:185px;width:573px;height:1px;background:#d6d6d6;"></div>
<div class="a" style="left:1301px;top:459px;width:6px;height:21px;background:#fff83a;"></div>
<div class="a" style="left:403px;top:201px;width:898px;height:330px;background:#f3f3f3;border-left:1px solid #a6a6a6;border-right:1px solid #a6a6a6;border-radius:3px 3px 0 0;overflow:hidden">
</div>
<div class="a" style="left:403px;top:201px;width:898px;height:17px;background:#b3b3b3;border-radius:3px 3px 0 0"></div>
<div class="a" style="left:403px;top:218px;width:898px;height:16px;background:#a6a6a6;"></div>
<svg class="a" style="left:411px;top:209px" width="20" height="16" viewBox="0 0 20 16"><path d="M13 2.5 H1.5 V13.3 H13" fill="none" stroke="#b9b9b9" stroke-width="3"/><path d="M6.3 5 H19 L14.2 10.7 H6.3 Z" fill="#b9b9b9"/></svg>
<div class="t " style="left:433px;top:206.5px;line-height:21px;height:21px;color:#959595;;letter-spacing:-0.579px">WF-Schritt Ø Durchlaufzeit</div>
<div class="a" style="left:409px;top:244px;width:868px;height:1px;background:#dcdcdc;"></div>
<div class="a" style="left:408px;top:244px;width:1px;height:283px;background:#dcdcdc;"></div>
<div class="a" style="left:1276px;top:244px;width:1px;height:283px;background:#dcdcdc;"></div>
<div class="btn" style="left:410px;top:247px;width:28px;height:22px"><svg width="28" height="22" viewBox="0 0 28 22"><rect x="10.6" y="1.6" width="6.3999999999999995" height="3.3999999999999995" rx="0.6" fill="#8cc63a" stroke="#3e7d23" stroke-width="1.2"/><rect x="8.6" y="7.3999999999999995" width="10.8" height="4.0" rx="1.6" fill="#b3cde9" stroke="#005b9e" stroke-width="1.2"/><rect x="5.6" y="13.5" width="16.5" height="3.8" rx="0.6" fill="#8cc63a" stroke="#3e7d23" stroke-width="1.2"/></svg></div>
<div class="btn" style="left:440px;top:247px;width:28px;height:22px"><svg width="28" height="22" viewBox="0 0 28 22"><rect x="5.6" y="1.6" width="16.5" height="3.3999999999999995" rx="0.6" fill="#8cc63a" stroke="#3e7d23" stroke-width="1.2"/><rect x="8.6" y="7.3999999999999995" width="10.8" height="4.0" rx="1.6" fill="#b3cde9" stroke="#005b9e" stroke-width="1.2"/><rect x="10.6" y="13.5" width="6.3999999999999995" height="3.8" rx="0.6" fill="#8cc63a" stroke="#3e7d23" stroke-width="1.2"/></svg></div>
<div class="btn" style="left:470px;top:247px;width:28px;height:22px"><svg width="28" height="22" viewBox="0 0 28 22"><path d="M8.4 1.3 H12 V6.7 H15.6 V1.3 H19.4 V5.2 L22.4 7.8 V19 H15.6 V10.5 H12 V19 H5.4 V7.8 L8.4 5.2 Z" fill="#92b5dc" stroke="#005b9e" stroke-width="1.4" stroke-linejoin="round"/><path d="M5.4 18.7 H12 M15.6 18.7 H22.4" stroke="#005b9e" stroke-width="2"/><path d="M7.4 9 V17 M10.2 3 V17 M17.6 3 V17" stroke="#b4cde9" stroke-width="1.4"/></svg></div>
<div class="btn" style="left:500px;top:247px;width:28px;height:22px"><svg width="28" height="22" viewBox="0 0 28 22"><path d="M8.4 1.3 H12 V6.7 H15.6 V1.3 H19.4 V5.2 L22.4 7.8 V19 H15.6 V10.5 H12 V19 H5.4 V7.8 L8.4 5.2 Z" fill="#c6d9ec" stroke="#7eb1d8" stroke-width="1.4" stroke-linejoin="round"/><path d="M5.4 18.7 H12 M15.6 18.7 H22.4" stroke="#7eb1d8" stroke-width="1.2"/><path d="M7.4 9 V17 M10.2 3 V17 M17.6 3 V17" stroke="#d3e3f1" stroke-width="1.4"/><path d="M18.6 7.6 V16 M14.4 11.8 H22.8" stroke="#a3a3d3" stroke-width="4" stroke-linecap="round"/><path d="M18.6 8 V15.6 M14.8 11.8 H22.4" stroke="#fff" stroke-width="2.6"/></svg></div>
<div class="btn" style="left:530px;top:247px;width:38px;height:22px"><svg width="38" height="22" viewBox="0 0 38 22"><path d="M3.3 1.5 H20.2 V4.8 L13.6 8.8 V14.8 L12.2 17.2 H9.4 V8.8 L3.3 4.8 Z" fill="#9bbbdf" stroke="#005b9e" stroke-width="1.4" stroke-linejoin="miter"/><path d="M2.6 1.5 H20.9" stroke="#005b9e" stroke-width="1.7"/><path d="M9.5 8.8 V17" stroke="#005b9e" stroke-width="1.7"/><circle cx="16.2" cy="10.8" r="2.7" fill="#e9eef4" stroke="#005b9e" stroke-width="1.4"/><path d="M25.5 0 V22" stroke="#a6a6a6" stroke-width="1"/><path d="M33.800000000000004 11.8 V16.8 H28.6 Z" fill="#1a1a1a"/></svg></div>
<div class="sep" style="left:572px;top:251px"></div>
<div class="btn" style="left:578px;top:247px;width:37px;height:22px"><svg width="37" height="22" viewBox="0 0 37 22"><path d="M9.5 3.5 H17.5 L21 7 V19 H9.5 Z" fill="#fff" stroke="#444" stroke-width="1"/><path d="M9 19.2 H21.4" stroke="#444" stroke-width="1.6"/><path d="M17.2 3.4 V7.2 H21" fill="none" stroke="#444" stroke-width="1"/><rect x="2.4" y="1.4" width="9.8" height="15" rx="1.2" fill="#a9c6e6" stroke="#005b9e" stroke-width="1.3"/><path d="M4 4.2 H8.6 M4 6.8 H8.6" stroke="#fff" stroke-width="1.2"/><rect x="3.4" y="9" width="2" height="6.6" fill="#cfe0f2"/><path d="M7 10 H12 V7.4 L17.6 11.9 L12 16.4 V13.8 H7 Z" fill="#7fbf2a" stroke="#3e7d23" stroke-width="1.2" stroke-linejoin="round"/><path d="M32.9 11.8 V16.8 H27.7 Z" fill="#1a1a1a"/></svg></div>
<div class="btn" style="left:617px;top:247px;width:28px;height:22px"><svg width="28" height="22" viewBox="0 0 28 22"><rect x="3.7" y="1.9" width="20.3" height="16" fill="#585858"/><rect x="4.9" y="2.8" width="5" height="4" fill="#ffd85a"/><rect x="10.8" y="2.8" width="5.4" height="4" fill="#9fc5e9"/><rect x="17.6" y="2.8" width="5.4" height="4" fill="#9cd06c"/><rect x="4.9" y="7.9" width="5" height="4" fill="#ff9b12"/><rect x="10.8" y="7.9" width="5.4" height="4" fill="#e6b9a9"/><rect x="17.6" y="7.9" width="5.4" height="4" fill="#ffc912"/><rect x="4.9" y="12.9" width="5" height="4" fill="#ffc9cd"/><rect x="10.8" y="12.9" width="5.4" height="4" fill="#a9d999"/><rect x="17.6" y="12.9" width="5.4" height="4" fill="#8bb9e1"/></svg></div>
<div class="sep" style="left:649px;top:251px"></div>
<div class="btn" style="left:655px;top:247px;width:28px;height:22px"><svg width="28" height="22" viewBox="0 0 28 22"><rect x="14.2" y="3.2" width="6.4" height="16" fill="#ffc426" stroke="#ff9b12" stroke-width="1.2"/><rect x="4.4" y="1.3" width="5.8" height="17.5" fill="#b9d1ec" stroke="#005b9e" stroke-width="1.4"/><path d="M3.7 19 H10.9" stroke="#005b9e" stroke-width="1.6"/><rect x="16.4" y="8.4" width="7" height="10.6" fill="#e0641f" stroke="#b3321a" stroke-width="1.3"/><rect x="10.5" y="12.5" width="6.6" height="6.5" fill="#80c12f" stroke="#3e8030" stroke-width="1.3"/></svg></div>
<div class="a" style="left:409px;top:271px;width:868px;height:1px;background:#dcdcdc;"></div>
<div class="h1" style="left:411px;top:277px;letter-spacing:0.38px">Anzahl und Ø Durchlaufzeiten Rechnungen</div>
<div class="a" style="left:409px;top:310px;width:868px;height:1px;background:#dcdcdc;"></div>
<div class="a" style="left:409px;top:312px;width:720px;height:25px;background:#e4e4e4;"></div>
<div class="a" style="left:538px;top:312px;width:1px;height:25px;background:#cdcdcd;"></div>
<div class="a" style="left:578px;top:312px;width:1px;height:25px;background:#cdcdcd;"></div>
<div class="a" style="left:888px;top:312px;width:1px;height:25px;background:#cdcdcd;"></div>
<div class="a" style="left:998px;top:312px;width:1px;height:25px;background:#cdcdcd;"></div>
<div class="t " style="left:412px;top:312px;line-height:25px;height:25px;;letter-spacing:-0.555px">WF Aufgabe</div>
<div class="t " style="left:541px;top:312px;line-height:25px;height:25px;;letter-spacing:-0.779px">RT</div>
<div class="t " style="left:581px;top:312px;line-height:25px;height:25px;;letter-spacing:-0.713px">Bezeichnung</div>
<div class="t r" style="left:890px;top:312px;line-height:25px;height:25px;width:105px;;letter-spacing:-0.681px">WF- Schritte</div>
<div class="t " style="left:1000.5px;top:312px;line-height:25px;height:25px;;letter-spacing:-0.428px">Ø Laufzeit</div>
<svg class="a" style="left:528px;top:313px" width="8" height="5" viewBox="0 0 8 5"><path d="M0 4.6 L4 0.2 L8 4.6 Z" fill="#c8102e"/></svg>
<svg class="a" style="left:568px;top:313px" width="8" height="5" viewBox="0 0 8 5"><path d="M0 4.6 L4 0.2 L8 4.6 Z" fill="#c8102e"/></svg>
<div class="a" style="left:409px;top:337px;width:720px;height:21px;background:#ebeef2;"></div>
<div class="a" style="left:538px;top:337px;width:1px;height:21px;background:#dcdfe4;"></div>
<div class="a" style="left:578px;top:337px;width:1px;height:21px;background:#dcdfe4;"></div>
<div class="a" style="left:888px;top:337px;width:1px;height:21px;background:#dcdfe4;"></div>
<div class="a" style="left:998px;top:337px;width:1px;height:21px;background:#dcdfe4;"></div>
<div class="a" style="left:1128px;top:337px;width:1px;height:21px;background:#dcdfe4;"></div>
<div class="a" style="left:409px;top:357px;width:720px;height:1px;background:#dfe2e6;"></div>
<div class="t " style="left:412px;top:336px;line-height:21px;height:21px;;letter-spacing:-0.923px">WS00288903</div>
<div class="t " style="left:540.5px;top:336px;line-height:21px;height:21px;;letter-spacing:1.278px">FI</div>
<div class="t u" style="left:581px;top:336px;line-height:21px;height:21px;;letter-spacing:-0.739px">Sachliche Prüfung</div>
<div class="t r" style="left:890px;top:336px;line-height:21px;height:21px;width:99px;;letter-spacing:-0.728px">13</div>
<div class="t " style="left:1001px;top:336px;line-height:21px;height:21px;;letter-spacing:-0.347px">000:00:13</div>
<div class="a" style="left:409px;top:358px;width:720px;height:21px;background:#d5e0f0;"></div>
<div class="a" style="left:538px;top:358px;width:1px;height:21px;background:#dcdfe4;"></div>
<div class="a" style="left:578px;top:358px;width:1px;height:21px;background:#dcdfe4;"></div>
<div class="a" style="left:888px;top:358px;width:1px;height:21px;background:#dcdfe4;"></div>
<div class="a" style="left:998px;top:358px;width:1px;height:21px;background:#dcdfe4;"></div>
<div class="a" style="left:1128px;top:358px;width:1px;height:21px;background:#dcdfe4;"></div>
<div class="a" style="left:409px;top:378px;width:720px;height:1px;background:#dfe2e6;"></div>
<div class="t " style="left:412px;top:357px;line-height:21px;height:21px;;letter-spacing:-0.923px">WS00288905</div>
<div class="t " style="left:540.5px;top:357px;line-height:21px;height:21px;;letter-spacing:1.500px"></div>
<div class="t u" style="left:581px;top:357px;line-height:21px;height:21px;;letter-spacing:-0.742px">Auswahl Prüfer</div>
<div class="t r" style="left:890px;top:357px;line-height:21px;height:21px;width:99px;;letter-spacing:-0.728px">12</div>
<div class="t " style="left:1001px;top:357px;line-height:21px;height:21px;;letter-spacing:-0.347px">000:03:37</div>
<div class="a" style="left:409px;top:379px;width:720px;height:21px;background:#ebeef2;"></div>
<div class="a" style="left:538px;top:379px;width:1px;height:21px;background:#dcdfe4;"></div>
<div class="a" style="left:578px;top:379px;width:1px;height:21px;background:#dcdfe4;"></div>
<div class="a" style="left:888px;top:379px;width:1px;height:21px;background:#dcdfe4;"></div>
<div class="a" style="left:998px;top:379px;width:1px;height:21px;background:#dcdfe4;"></div>
<div class="a" style="left:1128px;top:379px;width:1px;height:21px;background:#dcdfe4;"></div>
<div class="a" style="left:409px;top:399px;width:720px;height:1px;background:#dfe2e6;"></div>
<div class="t " style="left:412px;top:378px;line-height:21px;height:21px;;letter-spacing:-0.923px">WS00288907</div>
<div class="t " style="left:540.5px;top:378px;line-height:21px;height:21px;;letter-spacing:1.500px"></div>
<div class="t u" style="left:581px;top:378px;line-height:21px;height:21px;;letter-spacing:-0.644px">Rechnung Vervollständigen</div>
<div class="t r" style="left:890px;top:378px;line-height:21px;height:21px;width:99px;;letter-spacing:-0.728px">12</div>
<div class="t " style="left:1001px;top:378px;line-height:21px;height:21px;;letter-spacing:-0.347px">001:04:20</div>
<div class="a" style="left:409px;top:400px;width:720px;height:21px;background:#d5e0f0;"></div>
<div class="a" style="left:538px;top:400px;width:1px;height:21px;background:#dcdfe4;"></div>
<div class="a" style="left:578px;top:400px;width:1px;height:21px;background:#dcdfe4;"></div>
<div class="a" style="left:888px;top:400px;width:1px;height:21px;background:#dcdfe4;"></div>
<div class="a" style="left:998px;top:400px;width:1px;height:21px;background:#dcdfe4;"></div>
<div class="a" style="left:1128px;top:400px;width:1px;height:21px;background:#dcdfe4;"></div>
<div class="a" style="left:409px;top:420px;width:720px;height:1px;background:#dfe2e6;"></div>
<div class="t " style="left:412px;top:399px;line-height:21px;height:21px;;letter-spacing:-0.923px">WS00288908</div>
<div class="t " style="left:540.5px;top:399px;line-height:21px;height:21px;;letter-spacing:1.500px"></div>
<div class="t u" style="left:581px;top:399px;line-height:21px;height:21px;;letter-spacing:-0.782px">Buchung</div>
<div class="t r" style="left:890px;top:399px;line-height:21px;height:21px;width:99px;;letter-spacing:-0.728px">10</div>
<div class="t " style="left:1001px;top:399px;line-height:21px;height:21px;;letter-spacing:-0.100px"></div>
<div class="a" style="left:409px;top:421px;width:720px;height:21px;background:#ebeef2;"></div>
<div class="a" style="left:538px;top:421px;width:1px;height:21px;background:#dcdfe4;"></div>
<div class="a" style="left:578px;top:421px;width:1px;height:21px;background:#dcdfe4;"></div>
<div class="a" style="left:888px;top:421px;width:1px;height:21px;background:#dcdfe4;"></div>
<div class="a" style="left:998px;top:421px;width:1px;height:21px;background:#dcdfe4;"></div>
<div class="a" style="left:1128px;top:421px;width:1px;height:21px;background:#dcdfe4;"></div>
<div class="a" style="left:409px;top:441px;width:720px;height:1px;background:#dfe2e6;"></div>
<div class="t " style="left:412px;top:420px;line-height:21px;height:21px;;letter-spacing:-0.923px">WS00288909</div>
<div class="t " style="left:540.5px;top:420px;line-height:21px;height:21px;;letter-spacing:1.500px"></div>
<div class="t u" style="left:581px;top:420px;line-height:21px;height:21px;;letter-spacing:-0.759px">manuelle Buchung</div>
<div class="t r" style="left:890px;top:420px;line-height:21px;height:21px;width:99px;;letter-spacing:-0.728px">1</div>
<div class="t " style="left:1001px;top:420px;line-height:21px;height:21px;;letter-spacing:-0.347px">000:00:05</div>
<div class="a" style="left:409px;top:442px;width:720px;height:21px;background:#d5e0f0;"></div>
<div class="a" style="left:538px;top:442px;width:1px;height:21px;background:#dcdfe4;"></div>
<div class="a" style="left:578px;top:442px;width:1px;height:21px;background:#dcdfe4;"></div>
<div class="a" style="left:888px;top:442px;width:1px;height:21px;background:#dcdfe4;"></div>
<div class="a" style="left:998px;top:442px;width:1px;height:21px;background:#dcdfe4;"></div>
<div class="a" style="left:1128px;top:442px;width:1px;height:21px;background:#dcdfe4;"></div>
<div class="a" style="left:409px;top:462px;width:720px;height:1px;background:#dfe2e6;"></div>
<div class="t " style="left:412px;top:441px;line-height:21px;height:21px;;letter-spacing:-0.923px">WS00288910</div>
<div class="t " style="left:540.5px;top:441px;line-height:21px;height:21px;;letter-spacing:1.500px"></div>
<div class="t u" style="left:581px;top:441px;line-height:21px;height:21px;;letter-spacing:-0.747px">Freigabe</div>
<div class="t r" style="left:890px;top:441px;line-height:21px;height:21px;width:99px;;letter-spacing:-0.710px">11</div>
<div class="t " style="left:1001px;top:441px;line-height:21px;height:21px;;letter-spacing:-0.347px">000:00:52</div>
<div class="a" style="left:409px;top:463px;width:720px;height:21px;background:#ebeef2;"></div>
<div class="a" style="left:538px;top:463px;width:1px;height:21px;background:#dcdfe4;"></div>
<div class="a" style="left:578px;top:463px;width:1px;height:21px;background:#dcdfe4;"></div>
<div class="a" style="left:888px;top:463px;width:1px;height:21px;background:#dcdfe4;"></div>
<div class="a" style="left:998px;top:463px;width:1px;height:21px;background:#dcdfe4;"></div>
<div class="a" style="left:1128px;top:463px;width:1px;height:21px;background:#dcdfe4;"></div>
<div class="a" style="left:409px;top:483px;width:720px;height:1px;background:#dfe2e6;"></div>
<div class="t " style="left:412px;top:462px;line-height:21px;height:21px;;letter-spacing:-0.919px">WS00288911</div>
<div class="t " style="left:540.5px;top:462px;line-height:21px;height:21px;;letter-spacing:1.500px"></div>
<div class="t u" style="left:581px;top:462px;line-height:21px;height:21px;;letter-spacing:-0.740px">Vervollständigung nach Ablehnung</div>
<div class="t r" style="left:890px;top:462px;line-height:21px;height:21px;width:99px;;letter-spacing:-0.728px">1</div>
<div class="t " style="left:1001px;top:462px;line-height:21px;height:21px;;letter-spacing:-0.347px">000:00:31</div>
<div class="a" style="left:409px;top:484px;width:720px;height:21px;background:#c8e0ee;"></div>
<div class="a" style="left:581px;top:485px;width:306px;height:19px;background:#ebeef2;"></div>
<div class="a" style="left:538px;top:484px;width:1px;height:21px;background:#dcdfe4;"></div>
<div class="a" style="left:578px;top:484px;width:1px;height:21px;background:#dcdfe4;"></div>
<div class="a" style="left:888px;top:484px;width:1px;height:21px;background:#dcdfe4;"></div>
<div class="a" style="left:998px;top:484px;width:1px;height:21px;background:#dcdfe4;"></div>
<div class="a" style="left:1128px;top:484px;width:1px;height:21px;background:#dcdfe4;"></div>
<div class="a" style="left:409px;top:504px;width:720px;height:1px;background:#dfe2e6;"></div>
<div class="t " style="left:412px;top:483px;line-height:21px;height:21px;;letter-spacing:-0.923px">WS00288913</div>
<div class="t " style="left:540.5px;top:483px;line-height:21px;height:21px;;letter-spacing:1.500px"></div>
<div class="t u" style="left:581px;top:483px;line-height:21px;height:21px;;letter-spacing:-0.746px">Rechnungskontrolle</div>
<div class="t r" style="left:890px;top:483px;line-height:21px;height:21px;width:99px;;letter-spacing:-0.728px">5</div>
<div class="t " style="left:1001px;top:483px;line-height:21px;height:21px;;letter-spacing:-0.347px">000:00:08</div>
<div class="a" style="left:409px;top:505px;width:720px;height:21px;background:#ebeef2;"></div>
<div class="a" style="left:538px;top:505px;width:1px;height:21px;background:#dcdfe4;"></div>
<div class="a" style="left:578px;top:505px;width:1px;height:21px;background:#dcdfe4;"></div>
<div class="a" style="left:888px;top:505px;width:1px;height:21px;background:#dcdfe4;"></div>
<div class="a" style="left:998px;top:505px;width:1px;height:21px;background:#dcdfe4;"></div>
<div class="a" style="left:1128px;top:505px;width:1px;height:21px;background:#dcdfe4;"></div>
<div class="a" style="left:409px;top:525px;width:720px;height:1px;background:#dfe2e6;"></div>
<div class="t " style="left:412px;top:504px;line-height:21px;height:21px;;letter-spacing:-0.923px">WS00288914</div>
<div class="t " style="left:540.5px;top:504px;line-height:21px;height:21px;;letter-spacing:1.500px"></div>
<div class="t u" style="left:581px;top:504px;line-height:21px;height:21px;;letter-spacing:-0.741px">Zahlungsfreigabe</div>
<div class="t r" style="left:890px;top:504px;line-height:21px;height:21px;width:99px;;letter-spacing:-0.728px">5</div>
<div class="t " style="left:1001px;top:504px;line-height:21px;height:21px;;letter-spacing:-0.347px">002:14:29</div>
<div class="a" style="left:409px;top:336px;width:868px;height:1px;background:#d9d9d9;"></div>
<div class="a" style="left:1128px;top:337px;width:1px;height:190px;background:#d9d9d9;"></div>
<div class="a" style="left:409px;top:484px;width:720px;height:1px;background:#e07a28;"></div>
<div class="a" style="left:409px;top:504px;width:720px;height:1px;background:#e07a28;"></div>
<div class="a" style="left:577px;top:482px;width:141px;height:26px;border:3px solid #f0393c;border-radius:1px"></div>
<div class="a" style="left:160px;top:529px;width:4px;height:258px;background:linear-gradient(to right, rgba(0,0,0,0), rgba(0,0,0,0.10));"></div>
<div class="a" style="left:163px;top:527px;width:1144px;height:260px;background:#f3f3f3;border-left:1px solid #3a3a3a;border-radius:3px 0 0 0"></div>
<div class="a" style="left:163px;top:527px;width:1144px;height:17px;background:#525252;border-radius:3px 0 0 0"></div>
<div class="a" style="left:163px;top:544px;width:1144px;height:16px;background:#333333;"></div>
<svg class="a" style="left:171px;top:535px" width="20" height="16" viewBox="0 0 20 16"><path d="M13 2.5 H1.5 V13.3 H13" fill="none" stroke="#8c8c8c" stroke-width="3"/><path d="M6.3 5 H19 L14.2 10.7 H6.3 Z" fill="#8c8c8c"/></svg>
<div class="t " style="left:193px;top:532px;line-height:21px;height:21px;color:#dcdcdc;;letter-spacing:-0.730px">Eingeschränkte Belegliste</div>
<div class="a" style="left:169px;top:570px;width:1138px;height:1px;background:#dcdcdc;"></div>
<div class="a" style="left:168px;top:570px;width:1px;height:217px;background:#dcdcdc;"></div>
<div class="btn" style="left:170px;top:574px;width:28px;height:22px"><svg width="28" height="22" viewBox="0 0 28 22"><rect x="10.6" y="1.6" width="6.3999999999999995" height="3.3999999999999995" rx="0.6" fill="#8cc63a" stroke="#3e7d23" stroke-width="1.2"/><rect x="8.6" y="7.3999999999999995" width="10.8" height="4.0" rx="1.6" fill="#b3cde9" stroke="#005b9e" stroke-width="1.2"/><rect x="5.6" y="13.5" width="16.5" height="3.8" rx="0.6" fill="#8cc63a" stroke="#3e7d23" stroke-width="1.2"/></svg></div>
<div class="btn" style="left:200px;top:574px;width:28px;height:22px"><svg width="28" height="22" viewBox="0 0 28 22"><rect x="5.6" y="1.6" width="16.5" height="3.3999999999999995" rx="0.6" fill="#8cc63a" stroke="#3e7d23" stroke-width="1.2"/><rect x="8.6" y="7.3999999999999995" width="10.8" height="4.0" rx="1.6" fill="#b3cde9" stroke="#005b9e" stroke-width="1.2"/><rect x="10.6" y="13.5" width="6.3999999999999995" height="3.8" rx="0.6" fill="#8cc63a" stroke="#3e7d23" stroke-width="1.2"/></svg></div>
<div class="btn" style="left:230px;top:574px;width:28px;height:22px"><svg width="28" height="22" viewBox="0 0 28 22"><path d="M8.4 1.3 H12 V6.7 H15.6 V1.3 H19.4 V5.2 L22.4 7.8 V19 H15.6 V10.5 H12 V19 H5.4 V7.8 L8.4 5.2 Z" fill="#92b5dc" stroke="#005b9e" stroke-width="1.4" stroke-linejoin="round"/><path d="M5.4 18.7 H12 M15.6 18.7 H22.4" stroke="#005b9e" stroke-width="2"/><path d="M7.4 9 V17 M10.2 3 V17 M17.6 3 V17" stroke="#b4cde9" stroke-width="1.4"/></svg></div>
<div class="btn" style="left:260px;top:574px;width:28px;height:22px"><svg width="28" height="22" viewBox="0 0 28 22"><path d="M8.4 1.3 H12 V6.7 H15.6 V1.3 H19.4 V5.2 L22.4 7.8 V19 H15.6 V10.5 H12 V19 H5.4 V7.8 L8.4 5.2 Z" fill="#c6d9ec" stroke="#7eb1d8" stroke-width="1.4" stroke-linejoin="round"/><path d="M5.4 18.7 H12 M15.6 18.7 H22.4" stroke="#7eb1d8" stroke-width="1.2"/><path d="M7.4 9 V17 M10.2 3 V17 M17.6 3 V17" stroke="#d3e3f1" stroke-width="1.4"/><path d="M18.6 7.6 V16 M14.4 11.8 H22.8" stroke="#a3a3d3" stroke-width="4" stroke-linecap="round"/><path d="M18.6 8 V15.6 M14.8 11.8 H22.4" stroke="#fff" stroke-width="2.6"/></svg></div>
<div class="btn" style="left:290px;top:574px;width:38px;height:22px"><svg width="38" height="22" viewBox="0 0 38 22"><path d="M3.3 1.5 H20.2 V4.8 L13.6 8.8 V14.8 L12.2 17.2 H9.4 V8.8 L3.3 4.8 Z" fill="#9bbbdf" stroke="#005b9e" stroke-width="1.4" stroke-linejoin="miter"/><path d="M2.6 1.5 H20.9" stroke="#005b9e" stroke-width="1.7"/><path d="M9.5 8.8 V17" stroke="#005b9e" stroke-width="1.7"/><circle cx="16.2" cy="10.8" r="2.7" fill="#e9eef4" stroke="#005b9e" stroke-width="1.4"/><path d="M25.5 0 V22" stroke="#a6a6a6" stroke-width="1"/><path d="M33.800000000000004 11.8 V16.8 H28.6 Z" fill="#1a1a1a"/></svg></div>
<div class="sep" style="left:332px;top:578px"></div>
<div class="btn" style="left:338px;top:574px;width:37px;height:22px"><svg width="37" height="22" viewBox="0 0 37 22"><path d="M9.5 3.5 H17.5 L21 7 V19 H9.5 Z" fill="#fff" stroke="#444" stroke-width="1"/><path d="M9 19.2 H21.4" stroke="#444" stroke-width="1.6"/><path d="M17.2 3.4 V7.2 H21" fill="none" stroke="#444" stroke-width="1"/><rect x="2.4" y="1.4" width="9.8" height="15" rx="1.2" fill="#a9c6e6" stroke="#005b9e" stroke-width="1.3"/><path d="M4 4.2 H8.6 M4 6.8 H8.6" stroke="#fff" stroke-width="1.2"/><rect x="3.4" y="9" width="2" height="6.6" fill="#cfe0f2"/><path d="M7 10 H12 V7.4 L17.6 11.9 L12 16.4 V13.8 H7 Z" fill="#7fbf2a" stroke="#3e7d23" stroke-width="1.2" stroke-linejoin="round"/><path d="M32.9 11.8 V16.8 H27.7 Z" fill="#1a1a1a"/></svg></div>
<div class="btn" style="left:377px;top:574px;width:28px;height:22px"><svg width="28" height="22" viewBox="0 0 28 22"><rect x="3.7" y="1.9" width="20.3" height="16" fill="#585858"/><rect x="4.9" y="2.8" width="5" height="4" fill="#ffd85a"/><rect x="10.8" y="2.8" width="5.4" height="4" fill="#9fc5e9"/><rect x="17.6" y="2.8" width="5.4" height="4" fill="#9cd06c"/><rect x="4.9" y="7.9" width="5" height="4" fill="#ff9b12"/><rect x="10.8" y="7.9" width="5.4" height="4" fill="#e6b9a9"/><rect x="17.6" y="7.9" width="5.4" height="4" fill="#ffc912"/><rect x="4.9" y="12.9" width="5" height="4" fill="#ffc9cd"/><rect x="10.8" y="12.9" width="5.4" height="4" fill="#a9d999"/><rect x="17.6" y="12.9" width="5.4" height="4" fill="#8bb9e1"/></svg></div>
<div class="sep" style="left:409px;top:578px"></div>
<div class="btn" style="left:415px;top:574px;width:28px;height:22px"><svg width="28" height="22" viewBox="0 0 28 22"><rect x="14.2" y="3.2" width="6.4" height="16" fill="#ffc426" stroke="#ff9b12" stroke-width="1.2"/><rect x="4.4" y="1.3" width="5.8" height="17.5" fill="#b9d1ec" stroke="#005b9e" stroke-width="1.4"/><path d="M3.7 19 H10.9" stroke="#005b9e" stroke-width="1.6"/><rect x="16.4" y="8.4" width="7" height="10.6" fill="#e0641f" stroke="#b3321a" stroke-width="1.3"/><rect x="10.5" y="12.5" width="6.6" height="6.5" fill="#80c12f" stroke="#3e8030" stroke-width="1.3"/></svg></div>
<div class="sep" style="left:447px;top:578px"></div>
<div class="btn" style="left:453px;top:574px;width:28px;height:22px"><svg width="28" height="22" viewBox="0 0 28 22"><rect x="10.9" y="0.8" width="13" height="10.3" fill="#fff" stroke="#8a8a8a" stroke-width="0.8"/><rect x="10.9" y="0.8" width="13" height="4.2" fill="#6aa0cc"/><path d="M15.6 2.6 H18.4 M20 2.6 H22.8" stroke="#fff" stroke-width="1"/><rect x="12.7" y="5" width="2.2" height="3" fill="#ffc426"/><path d="M17 5 V11 M20.4 5 V11" stroke="#8a8a8a" stroke-width="0.8"/><rect x="3.7" y="7.9" width="12.3" height="11.5" fill="#555"/><rect x="3.7" y="7.9" width="12.3" height="4" fill="#005b9e"/><path d="M5 10 H7.4 M9 10 H11" stroke="#fff" stroke-width="1"/><rect x="4.8" y="11.9" width="3.1" height="6" fill="#ffd24a"/><rect x="8.8" y="11.9" width="2.2" height="6" fill="#ffd24a"/><rect x="12.7" y="11.9" width="2.2" height="6" fill="#fff"/><path d="M23 12.8 V16 H18.4 M20.8 13.6 L18.2 16 L20.8 18.6" fill="none" stroke="#555" stroke-width="1.3"/></svg></div>
<div class="btn" style="left:483px;top:574px;width:28px;height:22px"><svg width="28" height="22" viewBox="0 0 28 22"><rect x="4.8" y="3.7" width="7" height="11.2" rx="2.6" fill="#9bbbdf" stroke="#005b9e" stroke-width="1.7"/><rect x="16.2" y="3.7" width="7" height="11.2" rx="2.6" fill="#9bbbdf" stroke="#005b9e" stroke-width="1.7"/><path d="M6 3.5 H10.6 M17.4 3.5 H22 M6 15.1 H10.6 M17.4 15.1 H22" stroke="#005b9e" stroke-width="1.6"/><rect x="8.6" y="7" width="11.2" height="4.6" rx="1.4" fill="#a9c6e6" stroke="#005b9e" stroke-width="1.5"/></svg></div>
<div class="a" style="left:169px;top:597px;width:1138px;height:1px;background:#dcdcdc;"></div>
<div class="h1" style="left:170px;top:603px;letter-spacing:0.5px">Rechnungskontrolle</div>
<div class="a" style="left:169px;top:636px;width:1138px;height:1px;background:#dcdcdc;"></div>
<div class="a" style="left:169px;top:638px;width:1138px;height:24px;background:#e4e4e4;"></div>
<div class="t " style="left:171px;top:638px;line-height:25px;height:25px;;letter-spacing:-0.545px">Prozess ID</div>
<div class="a" style="left:243px;top:638px;width:1px;height:24px;background:#cdcdcd;"></div>
<div class="t " style="left:245px;top:638px;line-height:25px;height:25px;;letter-spacing:-0.250px">Rechn.typ</div>
<div class="a" style="left:313px;top:638px;width:1px;height:24px;background:#cdcdcd;"></div>
<div class="t " style="left:315px;top:638px;line-height:25px;height:25px;;letter-spacing:-0.578px">BuKr</div>
<div class="a" style="left:352px;top:638px;width:1px;height:24px;background:#cdcdcd;"></div>
<div class="t " style="left:354px;top:638px;line-height:25px;height:25px;;letter-spacing:-0.329px">Belegnr.</div>
<div class="a" style="left:439px;top:638px;width:1px;height:24px;background:#cdcdcd;"></div>
<div class="t " style="left:441px;top:638px;line-height:25px;height:25px;;letter-spacing:-1.072px">GJahr</div>
<div class="a" style="left:482px;top:638px;width:1px;height:24px;background:#cdcdcd;"></div>
<div class="t " style="left:484px;top:638px;line-height:25px;height:25px;;letter-spacing:0.698px">If. Anw.</div>
<div class="a" style="left:575px;top:638px;width:1px;height:24px;background:#cdcdcd;"></div>
<div class="t " style="left:577px;top:638px;line-height:25px;height:25px;;letter-spacing:-0.541px">Satznr</div>
<div class="a" style="left:622px;top:638px;width:1px;height:24px;background:#cdcdcd;"></div>
<div class="t " style="left:624px;top:638px;line-height:25px;height:25px;;letter-spacing:-0.376px">Satzart</div>
<div class="a" style="left:672px;top:638px;width:1px;height:24px;background:#cdcdcd;"></div>
<div class="t " style="left:674px;top:638px;line-height:25px;height:25px;;letter-spacing:-0.467px">Belegdatum</div>
<div class="a" style="left:765px;top:638px;width:1px;height:24px;background:#cdcdcd;"></div>
<div class="t " style="left:767px;top:638px;line-height:25px;height:25px;;letter-spacing:-0.514px">Buchungsd.</div>
<div class="a" style="left:858px;top:638px;width:1px;height:24px;background:#cdcdcd;"></div>
<div class="t " style="left:860px;top:638px;line-height:25px;height:25px;;letter-spacing:-0.506px">Blart</div>
<div class="a" style="left:891px;top:638px;width:1px;height:24px;background:#cdcdcd;"></div>
<div class="t " style="left:893px;top:638px;line-height:25px;height:25px;;letter-spacing:-0.536px">Status</div>
<div class="a" style="left:936px;top:638px;width:1px;height:24px;background:#cdcdcd;"></div>
<div class="t " style="left:938px;top:638px;line-height:25px;height:25px;;letter-spacing:-0.557px">RchgStat</div>
<div class="a" style="left:998px;top:638px;width:1px;height:24px;background:#cdcdcd;"></div>
<div class="t " style="left:1000px;top:638px;line-height:25px;height:25px;;letter-spacing:-0.516px">Lieferant</div>
<div class="a" style="left:1058px;top:638px;width:1px;height:24px;background:#cdcdcd;"></div>
<div class="t " style="left:1060px;top:638px;line-height:25px;height:25px;;letter-spacing:-0.530px">Debitor</div>
<div class="a" style="left:1108px;top:638px;width:1px;height:24px;background:#cdcdcd;"></div>
<div class="t " style="left:1110px;top:638px;line-height:25px;height:25px;;letter-spacing:-0.633px">Name</div>
<div class="a" style="left:1254px;top:638px;width:1px;height:24px;background:#cdcdcd;"></div>
<div class="t r" style="left:1230px;top:638px;line-height:25px;height:25px;width:72.5px;;letter-spacing:-0.246px">Betrag</div>
<div class="a" style="left:169px;top:662px;width:1138px;height:21px;background:#ebeef2;"></div>
<div class="a" style="left:169px;top:662px;width:74px;height:20px;background:#c8e0ee;"></div>
<div class="a" style="left:243px;top:662px;width:1px;height:21px;background:#dcdfe4;"></div>
<div class="a" style="left:313px;top:662px;width:1px;height:21px;background:#dcdfe4;"></div>
<div class="a" style="left:352px;top:662px;width:1px;height:21px;background:#dcdfe4;"></div>
<div class="a" style="left:439px;top:662px;width:1px;height:21px;background:#dcdfe4;"></div>
<div class="a" style="left:482px;top:662px;width:1px;height:21px;background:#dcdfe4;"></div>
<div class="a" style="left:575px;top:662px;width:1px;height:21px;background:#dcdfe4;"></div>
<div class="a" style="left:622px;top:662px;width:1px;height:21px;background:#dcdfe4;"></div>
<div class="a" style="left:672px;top:662px;width:1px;height:21px;background:#dcdfe4;"></div>
<div class="a" style="left:765px;top:662px;width:1px;height:21px;background:#dcdfe4;"></div>
<div class="a" style="left:858px;top:662px;width:1px;height:21px;background:#dcdfe4;"></div>
<div class="a" style="left:891px;top:662px;width:1px;height:21px;background:#dcdfe4;"></div>
<div class="a" style="left:936px;top:662px;width:1px;height:21px;background:#dcdfe4;"></div>
<div class="a" style="left:998px;top:662px;width:1px;height:21px;background:#dcdfe4;"></div>
<div class="a" style="left:1058px;top:662px;width:1px;height:21px;background:#dcdfe4;"></div>
<div class="a" style="left:1108px;top:662px;width:1px;height:21px;background:#dcdfe4;"></div>
<div class="a" style="left:1254px;top:662px;width:1px;height:21px;background:#dcdfe4;"></div>
<div class="a" style="left:169px;top:682px;width:1138px;height:1px;background:#dfe2e6;"></div>
<div class="t u" style="left:172px;top:662px;line-height:21px;height:21px;;letter-spacing:-0.710px">11</div>
<div class="t " style="left:245px;top:662px;line-height:21px;height:21px;;letter-spacing:1.278px">FI</div>
<div class="t " style="left:316px;top:662px;line-height:21px;height:21px;;letter-spacing:-0.378px">1000</div>
<div class="t u" style="left:355px;top:662px;line-height:21px;height:21px;;letter-spacing:-0.678px">1900000002</div>
<div class="t r" style="left:440px;top:662px;line-height:21px;height:21px;width:38px;;letter-spacing:-0.378px">2019</div>
<div class="t " style="left:484.5px;top:662px;line-height:21px;height:21px;;letter-spacing:-0.756px">QS_INVOICE</div>
<div class="t r" style="left:578px;top:662px;line-height:21px;height:21px;width:40px;letter-spacing:-0.73px;font-size:15.5px"><span class="u">3</span></div>
<div class="t " style="left:674.5px;top:662px;line-height:21px;height:21px;;letter-spacing:-0.270px">18.02.2019</div>
<div class="t " style="left:767.5px;top:662px;line-height:21px;height:21px;;letter-spacing:-0.270px">18.02.2019</div>
<div class="t " style="left:860px;top:662px;line-height:21px;height:21px;;letter-spacing:-0.797px">KR</div>
<div class="t " style="left:1001px;top:662px;line-height:21px;height:21px;;letter-spacing:-0.528px">10040</div>
<div class="t " style="left:1110.3px;top:662px;line-height:21px;height:21px;;letter-spacing:-0.626px">Büromaschinen Meier</div>
<div class="t r" style="left:1230px;top:662px;line-height:21px;height:21px;width:72.5px;;letter-spacing:-0.099px">119,00</div>
<div class="a" style="left:169px;top:683px;width:1138px;height:21px;background:#d5e0f0;"></div>
<div class="a" style="left:243px;top:683px;width:1px;height:21px;background:#dcdfe4;"></div>
<div class="a" style="left:313px;top:683px;width:1px;height:21px;background:#dcdfe4;"></div>
<div class="a" style="left:352px;top:683px;width:1px;height:21px;background:#dcdfe4;"></div>
<div class="a" style="left:439px;top:683px;width:1px;height:21px;background:#dcdfe4;"></div>
<div class="a" style="left:482px;top:683px;width:1px;height:21px;background:#dcdfe4;"></div>
<div class="a" style="left:575px;top:683px;width:1px;height:21px;background:#dcdfe4;"></div>
<div class="a" style="left:622px;top:683px;width:1px;height:21px;background:#dcdfe4;"></div>
<div class="a" style="left:672px;top:683px;width:1px;height:21px;background:#dcdfe4;"></div>
<div class="a" style="left:765px;top:683px;width:1px;height:21px;background:#dcdfe4;"></div>
<div class="a" style="left:858px;top:683px;width:1px;height:21px;background:#dcdfe4;"></div>
<div class="a" style="left:891px;top:683px;width:1px;height:21px;background:#dcdfe4;"></div>
<div class="a" style="left:936px;top:683px;width:1px;height:21px;background:#dcdfe4;"></div>
<div class="a" style="left:998px;top:683px;width:1px;height:21px;background:#dcdfe4;"></div>
<div class="a" style="left:1058px;top:683px;width:1px;height:21px;background:#dcdfe4;"></div>
<div class="a" style="left:1108px;top:683px;width:1px;height:21px;background:#dcdfe4;"></div>
<div class="a" style="left:1254px;top:683px;width:1px;height:21px;background:#dcdfe4;"></div>
<div class="a" style="left:169px;top:703px;width:1138px;height:1px;background:#dfe2e6;"></div>
<div class="t u" style="left:172px;top:683px;line-height:21px;height:21px;;letter-spacing:-0.728px">184</div>
<div class="t " style="left:245px;top:683px;line-height:21px;height:21px;;letter-spacing:1.278px">FI</div>
<div class="t " style="left:316px;top:683px;line-height:21px;height:21px;;letter-spacing:-0.378px">1000</div>
<div class="t u" style="left:355px;top:683px;line-height:21px;height:21px;;letter-spacing:-0.678px">1900000029</div>
<div class="t r" style="left:440px;top:683px;line-height:21px;height:21px;width:38px;;letter-spacing:-0.378px">2019</div>
<div class="t " style="left:484.5px;top:683px;line-height:21px;height:21px;;letter-spacing:-0.756px">QS_INVOICE</div>
<div class="t r" style="left:578px;top:683px;line-height:21px;height:21px;width:40px;letter-spacing:-0.73px;font-size:15.5px"><span class="u">87</span></div>
<div class="t " style="left:674.5px;top:683px;line-height:21px;height:21px;;letter-spacing:-0.270px">26.02.2019</div>
<div class="t " style="left:767.5px;top:683px;line-height:21px;height:21px;;letter-spacing:-0.270px">26.02.2019</div>
<div class="t " style="left:860px;top:683px;line-height:21px;height:21px;;letter-spacing:-0.797px">KR</div>
<div class="t " style="left:1001px;top:683px;line-height:21px;height:21px;;letter-spacing:-0.528px">10040</div>
<div class="t " style="left:1110.3px;top:683px;line-height:21px;height:21px;;letter-spacing:-0.626px">Büromaschinen Meier</div>
<div class="t r" style="left:1230px;top:683px;line-height:21px;height:21px;width:72.5px;;letter-spacing:-0.099px">119,00</div>
<div class="a" style="left:169px;top:704px;width:1138px;height:21px;background:#ebeef2;"></div>
<div class="a" style="left:243px;top:704px;width:1px;height:21px;background:#dcdfe4;"></div>
<div class="a" style="left:313px;top:704px;width:1px;height:21px;background:#dcdfe4;"></div>
<div class="a" style="left:352px;top:704px;width:1px;height:21px;background:#dcdfe4;"></div>
<div class="a" style="left:439px;top:704px;width:1px;height:21px;background:#dcdfe4;"></div>
<div class="a" style="left:482px;top:704px;width:1px;height:21px;background:#dcdfe4;"></div>
<div class="a" style="left:575px;top:704px;width:1px;height:21px;background:#dcdfe4;"></div>
<div class="a" style="left:622px;top:704px;width:1px;height:21px;background:#dcdfe4;"></div>
<div class="a" style="left:672px;top:704px;width:1px;height:21px;background:#dcdfe4;"></div>
<div class="a" style="left:765px;top:704px;width:1px;height:21px;background:#dcdfe4;"></div>
<div class="a" style="left:858px;top:704px;width:1px;height:21px;background:#dcdfe4;"></div>
<div class="a" style="left:891px;top:704px;width:1px;height:21px;background:#dcdfe4;"></div>
<div class="a" style="left:936px;top:704px;width:1px;height:21px;background:#dcdfe4;"></div>
<div class="a" style="left:998px;top:704px;width:1px;height:21px;background:#dcdfe4;"></div>
<div class="a" style="left:1058px;top:704px;width:1px;height:21px;background:#dcdfe4;"></div>
<div class="a" style="left:1108px;top:704px;width:1px;height:21px;background:#dcdfe4;"></div>
<div class="a" style="left:1254px;top:704px;width:1px;height:21px;background:#dcdfe4;"></div>
<div class="a" style="left:169px;top:724px;width:1138px;height:1px;background:#dfe2e6;"></div>
<div class="t u" style="left:172px;top:704px;line-height:21px;height:21px;;letter-spacing:-0.728px">186</div>
<div class="t " style="left:245px;top:704px;line-height:21px;height:21px;;letter-spacing:1.278px">FI</div>
<div class="t " style="left:316px;top:704px;line-height:21px;height:21px;;letter-spacing:-0.378px">1000</div>
<div class="t u" style="left:355px;top:704px;line-height:21px;height:21px;;letter-spacing:-0.678px">1900000030</div>
<div class="t r" style="left:440px;top:704px;line-height:21px;height:21px;width:38px;;letter-spacing:-0.378px">2019</div>
<div class="t " style="left:484.5px;top:704px;line-height:21px;height:21px;;letter-spacing:-0.756px">QS_INVOICE</div>
<div class="t r" style="left:578px;top:704px;line-height:21px;height:21px;width:40px;letter-spacing:-0.73px;font-size:15.5px"><span class="u">88</span></div>
<div class="t " style="left:674.5px;top:704px;line-height:21px;height:21px;;letter-spacing:-0.270px">26.02.2019</div>
<div class="t " style="left:767.5px;top:704px;line-height:21px;height:21px;;letter-spacing:-0.270px">26.02.2019</div>
<div class="t " style="left:860px;top:704px;line-height:21px;height:21px;;letter-spacing:-0.797px">KR</div>
<div class="t " style="left:1001px;top:704px;line-height:21px;height:21px;;letter-spacing:-0.528px">10040</div>
<div class="t " style="left:1110.3px;top:704px;line-height:21px;height:21px;;letter-spacing:-0.626px">Büromaschinen Meier</div>
<div class="t r" style="left:1230px;top:704px;line-height:21px;height:21px;width:72.5px;;letter-spacing:-0.099px">119,00</div>
<div class="a" style="left:169px;top:725px;width:1138px;height:21px;background:#d5e0f0;"></div>
<div class="a" style="left:243px;top:725px;width:1px;height:21px;background:#dcdfe4;"></div>
<div class="a" style="left:313px;top:725px;width:1px;height:21px;background:#dcdfe4;"></div>
<div class="a" style="left:352px;top:725px;width:1px;height:21px;background:#dcdfe4;"></div>
<div class="a" style="left:439px;top:725px;width:1px;height:21px;background:#dcdfe4;"></div>
<div class="a" style="left:482px;top:725px;width:1px;height:21px;background:#dcdfe4;"></div>
<div class="a" style="left:575px;top:725px;width:1px;height:21px;background:#dcdfe4;"></div>
<div class="a" style="left:622px;top:725px;width:1px;height:21px;background:#dcdfe4;"></div>
<div class="a" style="left:672px;top:725px;width:1px;height:21px;background:#dcdfe4;"></div>
<div class="a" style="left:765px;top:725px;width:1px;height:21px;background:#dcdfe4;"></div>
<div class="a" style="left:858px;top:725px;width:1px;height:21px;background:#dcdfe4;"></div>
<div class="a" style="left:891px;top:725px;width:1px;height:21px;background:#dcdfe4;"></div>
<div class="a" style="left:936px;top:725px;width:1px;height:21px;background:#dcdfe4;"></div>
<div class="a" style="left:998px;top:725px;width:1px;height:21px;background:#dcdfe4;"></div>
<div class="a" style="left:1058px;top:725px;width:1px;height:21px;background:#dcdfe4;"></div>
<div class="a" style="left:1108px;top:725px;width:1px;height:21px;background:#dcdfe4;"></div>
<div class="a" style="left:1254px;top:725px;width:1px;height:21px;background:#dcdfe4;"></div>
<div class="a" style="left:169px;top:745px;width:1138px;height:1px;background:#dfe2e6;"></div>
<div class="t u" style="left:172px;top:725px;line-height:21px;height:21px;;letter-spacing:-0.728px">188</div>
<div class="t " style="left:245px;top:725px;line-height:21px;height:21px;;letter-spacing:1.278px">FI</div>
<div class="t " style="left:316px;top:725px;line-height:21px;height:21px;;letter-spacing:-0.378px">1000</div>
<div class="t u" style="left:355px;top:725px;line-height:21px;height:21px;;letter-spacing:-0.678px">1900000031</div>
<div class="t r" style="left:440px;top:725px;line-height:21px;height:21px;width:38px;;letter-spacing:-0.378px">2019</div>
<div class="t " style="left:484.5px;top:725px;line-height:21px;height:21px;;letter-spacing:-0.756px">QS_INVOICE</div>
<div class="t r" style="left:578px;top:725px;line-height:21px;height:21px;width:40px;letter-spacing:-0.73px;font-size:15.5px"><span class="u">89</span></div>
<div class="t " style="left:674.5px;top:725px;line-height:21px;height:21px;;letter-spacing:-0.270px">26.02.2019</div>
<div class="t " style="left:767.5px;top:725px;line-height:21px;height:21px;;letter-spacing:-0.270px">26.02.2019</div>
<div class="t " style="left:860px;top:725px;line-height:21px;height:21px;;letter-spacing:-0.797px">KR</div>
<div class="t " style="left:1001px;top:725px;line-height:21px;height:21px;;letter-spacing:-0.528px">10040</div>
<div class="t " style="left:1110.3px;top:725px;line-height:21px;height:21px;;letter-spacing:-0.626px">Büromaschinen Meier</div>
<div class="t r" style="left:1230px;top:725px;line-height:21px;height:21px;width:72.5px;;letter-spacing:-0.099px">119,00</div>
<div class="a" style="left:169px;top:746px;width:1138px;height:21px;background:#ebeef2;"></div>
<div class="a" style="left:243px;top:746px;width:1px;height:21px;background:#dcdfe4;"></div>
<div class="a" style="left:313px;top:746px;width:1px;height:21px;background:#dcdfe4;"></div>
<div class="a" style="left:352px;top:746px;width:1px;height:21px;background:#dcdfe4;"></div>
<div class="a" style="left:439px;top:746px;width:1px;height:21px;background:#dcdfe4;"></div>
<div class="a" style="left:482px;top:746px;width:1px;height:21px;background:#dcdfe4;"></div>
<div class="a" style="left:575px;top:746px;width:1px;height:21px;background:#dcdfe4;"></div>
<div class="a" style="left:622px;top:746px;width:1px;height:21px;background:#dcdfe4;"></div>
<div class="a" style="left:672px;top:746px;width:1px;height:21px;background:#dcdfe4;"></div>
<div class="a" style="left:765px;top:746px;width:1px;height:21px;background:#dcdfe4;"></div>
<div class="a" style="left:858px;top:746px;width:1px;height:21px;background:#dcdfe4;"></div>
<div class="a" style="left:891px;top:746px;width:1px;height:21px;background:#dcdfe4;"></div>
<div class="a" style="left:936px;top:746px;width:1px;height:21px;background:#dcdfe4;"></div>
<div class="a" style="left:998px;top:746px;width:1px;height:21px;background:#dcdfe4;"></div>
<div class="a" style="left:1058px;top:746px;width:1px;height:21px;background:#dcdfe4;"></div>
<div class="a" style="left:1108px;top:746px;width:1px;height:21px;background:#dcdfe4;"></div>
<div class="a" style="left:1254px;top:746px;width:1px;height:21px;background:#dcdfe4;"></div>
<div class="a" style="left:169px;top:766px;width:1138px;height:1px;background:#dfe2e6;"></div>
<div class="t u" style="left:172px;top:746px;line-height:21px;height:21px;;letter-spacing:-0.728px">242</div>
<div class="t " style="left:245px;top:746px;line-height:21px;height:21px;;letter-spacing:1.278px">FI</div>
<div class="t " style="left:316px;top:746px;line-height:21px;height:21px;;letter-spacing:-0.378px">1000</div>
<div class="t u" style="left:355px;top:746px;line-height:21px;height:21px;;letter-spacing:-0.678px">1900000035</div>
<div class="t r" style="left:440px;top:746px;line-height:21px;height:21px;width:38px;;letter-spacing:-0.378px">2019</div>
<div class="t " style="left:484.5px;top:746px;line-height:21px;height:21px;;letter-spacing:-0.756px">QS_INVOICE</div>
<div class="t r" style="left:578px;top:746px;line-height:21px;height:21px;width:40px;letter-spacing:-0.73px;font-size:15.5px"><span class="u">100</span></div>
<div class="t " style="left:674.5px;top:746px;line-height:21px;height:21px;;letter-spacing:-0.270px">28.02.2019</div>
<div class="t " style="left:767.5px;top:746px;line-height:21px;height:21px;;letter-spacing:-0.270px">28.02.2019</div>
<div class="t " style="left:860px;top:746px;line-height:21px;height:21px;;letter-spacing:-0.797px">KR</div>
<div class="t " style="left:1001px;top:746px;line-height:21px;height:21px;;letter-spacing:-0.528px">10040</div>
<div class="t " style="left:1110.3px;top:746px;line-height:21px;height:21px;;letter-spacing:-0.626px">Büromaschinen Meier</div>
<div class="t r" style="left:1230px;top:746px;line-height:21px;height:21px;width:72.5px;;letter-spacing:-0.099px">119,00</div>
<div class="a" style="left:169px;top:662px;width:1138px;height:1px;background:#d9d9d9;"></div>
<div class="a" style="left:169px;top:767px;width:1138px;height:1px;background:#dddddd;"></div>
<div class="a" style="left:0;top:0;width:1307px;height:787px;border:1px solid #bdbdbd;pointer-events:none"></div>
</body></html>
